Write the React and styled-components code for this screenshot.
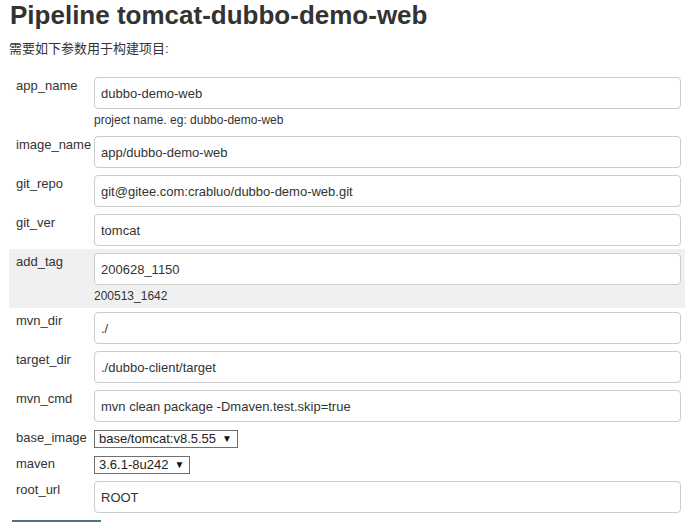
import styled, {createGlobalStyle} from "styled-components";

const params = [
    {name: "app_name", type: "text", value: "dubbo-demo-web", help: "project name. eg: dubbo-demo-web"},
    {name: "image_name", type: "text", value: "app/dubbo-demo-web"},
    {name: "git_repo", type: "text", value: "git@gitee.com:crabluo/dubbo-demo-web.git"},
    {name: "git_ver", type: "text", value: "tomcat"},
    {name: "add_tag", type: "text", value: "200628_1150", help: "200513_1642", highlight: true},
    {name: "mvn_dir", type: "text", value: "./"},
    {name: "target_dir", type: "text", value: "./dubbo-client/target"},
    {name: "mvn_cmd", type: "text", value: "mvn clean package -Dmaven.test.skip=true"},
    {name: "base_image", type: "select", value: "base/tomcat:v8.5.55"},
    {name: "maven", type: "select", value: "3.6.1-8u242"},
    {name: "root_url", type: "text", value: "ROOT"},
];

export default function App() {
    return (
        <Page>
            <GlobalStyle />
            <Title>Pipeline tomcat-dubbo-demo-web</Title>
            <Intro>需要如下参数用于构建项目:</Intro>

            <ParamTable>
                {params.map(p => (
                    <Row key={p.name} $highlight={p.highlight} $select={p.type === "select"}>
                        <Label $select={p.type === "select"}>{p.name}</Label>
                        <Field $select={p.type === "select"}>
                            {p.type === "select" ? (
                                <SelectBox>
                                    <span>{p.value}</span>
                                    <Arrow>▼</Arrow>
                                </SelectBox>
                            ) : (
                                <TextInput defaultValue={p.value} />
                            )}
                            {p.help && <Help>{p.help}</Help>}
                        </Field>
                    </Row>
                ))}
            </ParamTable>

            {/* only the top edge of the Build button shows in the frame */}
            <BuildButton aria-label="Build" />
        </Page>
    )
}

const GlobalStyle = createGlobalStyle`
    html, body {
        margin: 0;
        padding: 0;
        background: #fff;
        overflow: hidden;
    }
    body {
        font-family: "Liberation Sans", Arial, "Noto Sans CJK SC", sans-serif;
        color: #333;
    }
`

const Page = styled.div`
    display: flex;
    flex-direction: column;
    align-items: stretch;
    padding: 0 2px 0 9px;
`

const Title = styled.h1`
    margin: 0 0 0 1px;
    font-size: 26px;
    line-height: 30px;
    font-weight: bold;
    color: #333;
`

const Intro = styled.div`
    margin-top: 10px;
    font-size: 13px;
    line-height: 18px;
`

const ParamTable = styled.div`
    margin-top: 15px;
    display: flex;
    flex-direction: column;
`

const Row = styled.div`
    display: grid;
    grid-template-columns: 85px 1fr;
    padding: ${p => p.$select ? "4px 0 3px" : "1px 0 3px"};
    background: ${p => p.$highlight ? "#f0f0f0" : "transparent"};
`

const Label = styled.div`
    padding: ${p => p.$select ? "0 0 0 7px" : "3px 0 0 7px"};
    font-size: 13px;
    line-height: 18px;
    color: #333;
    white-space: nowrap;
`

const Field = styled.div`
    display: flex;
    flex-direction: column;
    align-items: flex-start;
    padding: ${p => p.$select ? "1px 4px 0 0" : "3px 4px 0 0"};
`

const TextInput = styled.input`
    box-sizing: border-box;
    width: 100%;
    height: 32px;
    border: 1px solid #ccc;
    border-radius: 4px;
    padding: 0 6px;
    font-family: "Liberation Sans", Arial, sans-serif;
    font-size: 13px;
    color: #333;
    background: #fff;
    outline: none;
`

const SelectBox = styled.div`
    box-sizing: border-box;
    display: flex;
    align-items: center;
    gap: 6px;
    height: 18px;
    padding: 0 5px 0 4px;
    border: 1px solid #707070;
    background: #fff;
    font-size: 13px;
    line-height: 16px;
    color: #222;
`

const Arrow = styled.span`
    font-size: 10px;
    line-height: 16px;
    color: #111;
`

const Help = styled.div`
    margin-top: 3px;
    font-size: 12px;
    line-height: 17px;
    color: #333;
`

const BuildButton = styled.button`
    align-self: flex-start;
    margin: 4px 0 0 3px;
    width: 89px;
    height: 30px;
    border: none;
    border-radius: 0;
    background: #4b758b;
`
